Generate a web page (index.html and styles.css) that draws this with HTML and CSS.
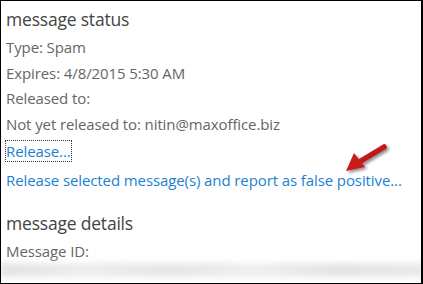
FILE: index.html
```html
<!DOCTYPE html>
<html>
<head>
<meta charset="utf-8">
<link rel="stylesheet" href="styles.css">
</head>
<body>
<div class="frame">
  <div class="panel">
    <h2 class="heading">message status</h2>
    <div class="row">Type: Spam</div>
    <div class="row">Expires: 4/8/2015 5:30 AM</div>
    <div class="row">Released to:</div>
    <div class="row">Not yet released to: nitin@maxoffice.biz</div>
    <div class="row link-row"><a class="link focused">Release...</a></div>
    <div class="row link-row"><a class="link">Release selected message(s) and report as false positive...</a></div>
    <h2 class="heading second">message details</h2>
    <div class="row">Message ID:</div>
    <div class="blurred"></div>
  </div>
  <svg class="arrow" width="60" height="45" viewBox="0 0 60 45">
    <defs>
      <linearGradient id="g" x1="0" y1="0" x2="1" y2="1">
        <stop offset="0" stop-color="#d9262a"/>
        <stop offset="1" stop-color="#a50d10"/>
      </linearGradient>
      <filter id="s" x="-30%" y="-30%" width="160%" height="160%">
        <feGaussianBlur in="SourceAlpha" stdDeviation="1.5"/>
        <feOffset dx="1.5" dy="2" result="b"/>
        <feComponentTransfer><feFuncA type="linear" slope="0.45"/></feComponentTransfer>
        <feMerge><feMergeNode/><feMergeNode in="SourceGraphic"/></feMerge>
      </filter>
    </defs>
    <g filter="url(#s)">
      <path d="M52 10 L27 25" stroke="url(#g)" stroke-width="5.5" stroke-linecap="round" fill="none"/>
      <path d="M14 34 L22 16 L33 30 Z" fill="#c81a1e"/>
    </g>
  </svg>
</div>
</body>
</html>
```
FILE: styles.css
```css
html, body {
  margin: 0;
  padding: 0;
  background: #fff;
}
.frame {
  position: relative;
  width: 423px;
  height: 284px;
  box-sizing: border-box;
  border-top: 1px solid #000;
  border-left: 1px solid #000;
  border-right: 2px solid #000;
  border-bottom: 1px solid #000;
  overflow: hidden;
  font-family: "Segoe UI", "Open Sans", "Noto Sans", sans-serif;
}
.panel {
  display: flex;
  flex-direction: column;
  padding: 4px 0 0 5px;
}
.heading {
  margin: 0 0 2px 0;
  font-weight: normal;
  font-size: 17.5px;
  line-height: 28px;
  color: #444;
  letter-spacing: -0.2px;
}
.heading.second {
  margin-top: 14px;
}
.row {
  font-size: 15px;
  line-height: 25.5px;
  color: #666;
  letter-spacing: -0.1px;
  white-space: nowrap;
}
.link-row {
  line-height: 29px;
}
.link {
  color: #1c7fd1;
  text-decoration: none;
}
.link.focused {
  outline: 1px dotted #333;
  outline-offset: 0;
}
.blurred {
  height: 14px;
  margin: -2px -6px 0 -6px;
  background: linear-gradient(90deg, #e3e3e3, #ededed 20%, #e6e6e6 40%, #efefef 60%, #e4e4e4 80%, #eaeaea);
  filter: blur(3px);
}
.arrow {
  position: absolute;
  left: 331px;
  top: 136px;
}
```
